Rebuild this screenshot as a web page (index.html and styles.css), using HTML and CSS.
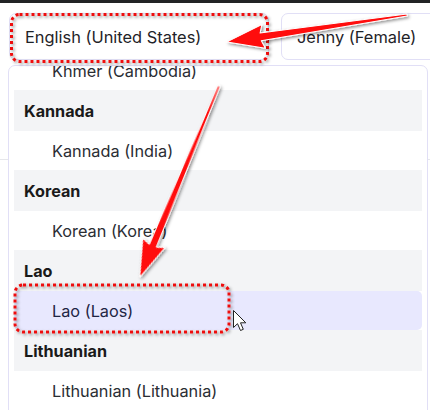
FILE: index.html
```html
<!DOCTYPE html>
<html lang="en">
<head>
<meta charset="utf-8">
<title>Voice picker</title>
<link rel="stylesheet" href="styles.css">
</head>
<body>
<div class="topbar"></div>
<div class="toolbar">
  <div class="select-wrap">
    <div class="select">English (United States)</div>
    <div class="dropdown">
      <ul class="list">
        <li class="item">Khmer (Cambodia)</li>
        <li class="group">Kannada</li>
        <li class="item">Kannada (India)</li>
        <li class="group">Korean</li>
        <li class="item">Korean (Korea)</li>
        <li class="group">Lao</li>
        <li class="item selected">Lao (Laos)</li>
        <li class="group">Lithuanian</li>
        <li class="item">Lithuanian (Lithuania)</li>
        <li class="group">Macedonian</li>
      </ul>
    </div>
  </div>
  <div class="select second">Jenny (Female)</div>
</div>
<div class="content"></div>

<svg class="annotations" width="430" height="410" viewBox="0 0 430 410" xmlns="http://www.w3.org/2000/svg">
  <defs>
    <filter id="sh" x="-20%" y="-20%" width="140%" height="140%">
      <feDropShadow dx="1.5" dy="1.5" stdDeviation="1.5" flood-color="#000" flood-opacity="0.45"/>
    </filter>
  </defs>
  <rect x="11.5" y="14.5" width="256" height="47" rx="8" fill="none" stroke="#ee1111" stroke-width="3" stroke-dasharray="3 3" filter="url(#sh)"/>
  <rect x="15" y="285" width="214" height="47" rx="8" fill="none" stroke="#ee1111" stroke-width="3" stroke-dasharray="3 3" filter="url(#sh)"/>
  <g filter="url(#sh)">
    <polygon transform="translate(407,15) rotate(171.5)" points="0,-1 148,-3.8 145,-12 182,0 145,12 148,3.8 0,1" fill="#ff0a0a" stroke="#fff" stroke-width="1" stroke-linejoin="round"/>
    <polygon transform="translate(219,86) rotate(112.5)" points="0,-1 173,-3.8 170,-12 207,0 170,12 173,3.8 0,1" fill="#ff0a0a" stroke="#fff" stroke-width="1" stroke-linejoin="round"/>
  </g>
  <path transform="translate(233.5,310.5)" d="M0,0 L0,17 L4,13.2 L7,20 L9.8,18.8 L7,12.3 L12.3,12.3 Z" fill="#fff" stroke="#222" stroke-width="1" stroke-linejoin="round"/>
</svg>
</body>
</html>
```

FILE: styles.css
```css
* { box-sizing: border-box; }

html, body {
  margin: 0;
  padding: 0;
  width: 430px;
  height: 410px;
  overflow: hidden;
  background: #ffffff;
  font-family: "Inter", "Noto Sans", sans-serif;
  color: #1f2328;
}

.topbar {
  height: 3px;
  background: #222325;
}

.toolbar {
  display: flex;
  gap: 12px;
  padding: 10px 0 0 9px;
  width: 700px;
}

.select-wrap {
  position: relative;
}

.select {
  width: 260px;
  height: 47px;
  border: 1px solid #e1dff6;
  border-radius: 7px;
  padding: 0 15px;
  display: flex;
  align-items: center;
  font-size: 16.4px;
  background: #fff;
}

.second {
  width: 260px;
}

.content {
  height: 100px;
  border-bottom: 1px solid #e6e7eb;
}

.dropdown {
  position: absolute;
  left: -1px;
  top: 52px;
  width: 420px;
  height: 360px;
  background: #fff;
  border: 1px solid #e1dff6;
  border-radius: 7px;
  overflow: hidden;
  z-index: 5;
}

.list {
  list-style: none;
  margin: -15px 0 0 0;
  padding: 0 5px;
}

.group {
  height: 41px;
  display: flex;
  align-items: center;
  padding-left: 10px;
  background: #f3f4f6;
  font-weight: 700;
  font-size: 16.2px;
  color: #1a1a1a;
}

.item {
  height: 39px;
  display: flex;
  align-items: center;
  padding-left: 38px;
  font-size: 16.3px;
  color: #2a2d33;
}

.item.selected {
  background: #e8e8fe;
  border-radius: 5px;
  color: #1f2544;
}

.annotations {
  position: absolute;
  left: 0;
  top: 0;
  pointer-events: none;
  z-index: 10;
}
```
